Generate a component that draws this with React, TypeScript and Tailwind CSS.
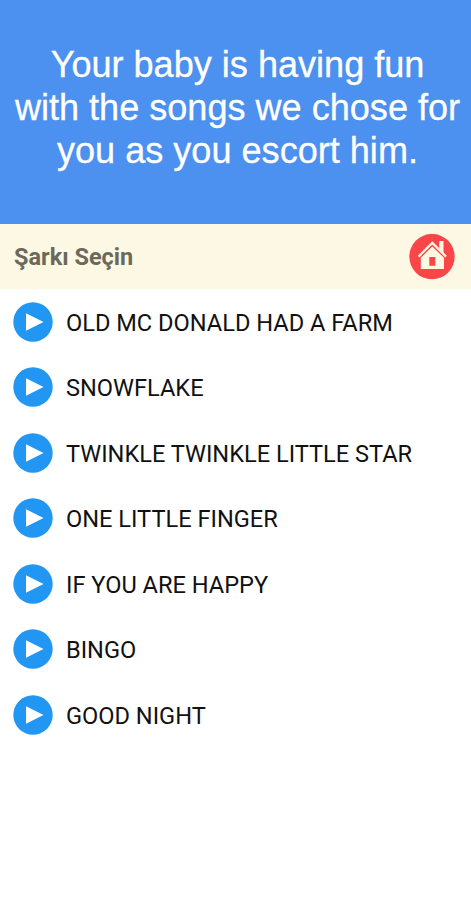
const songs = ["OLD MC DONALD HAD A FARM", "SNOWFLAKE", "TWINKLE TWINKLE LITTLE STAR", "ONE LITTLE FINGER", "IF YOU ARE HAPPY", "BINGO", "GOOD NIGHT"];

function HomeIcon() {
  return (
    <svg viewBox="0 0 46 46" className="h-[46px] w-[46px]" aria-label="Home">
      <circle cx="23" cy="22.600" r="22.700" fill="#fb4649" />
      <path d="M30.300 7h4.200v12l-4.200-4z" fill="#fdf8e3" />
      <path d="M9.600 22.600 23.300 8.900 37 22.600" fill="none" stroke="#fdf8e3" strokeWidth="2.200" />
      <path fillRule="evenodd" d="M11.800 23.800 23.300 12.500 35 23.800V35H11.800zM20.300 23v8.700h6V23z" fill="#fdf8e3" />
    </svg>
  );
}

function PlayIcon() {
  return (
    <svg viewBox="0 0 40 40" className="h-10 w-10 shrink-0" aria-hidden="true">
      <circle cx="20" cy="20" r="19.700" fill="#2196f3" />
      <path d="M13 11.200v17.600L30.500 20z" fill="#fff" />
    </svg>
  );
}

export default function App() {
  return (
    <main className="h-[900px] w-[471px] overflow-hidden bg-white font-['Roboto',sans-serif]">
      <header className="h-[224px] bg-[#4c90f0] pt-[43px] pl-[4px] text-center font-['Liberation_Sans',sans-serif] text-[36.100px] leading-[43px] text-white [-webkit-text-stroke:0.3px_white]">
        <p className="whitespace-nowrap">Your baby is having fun<br />with the songs we chose for<br />you as you escort him.</p>
      </header>
      <div className="flex h-[65px] items-center justify-between bg-[#fdf8e3] pr-4 pl-[14px]">
        <h1 className="pt-[3px] text-[23.500px] font-bold text-[#6b695c]">Şarkı Seçin</h1>
        <HomeIcon />
      </div>
      <ul>
        {songs.map((song) => (
          <li key={song} className="flex h-[65.500px] items-center gap-[13px] pl-[13px] text-[23.600px] text-[#111]">
            <PlayIcon /><span className="pt-[3px]">{song}</span>
          </li>
        ))}
      </ul>
    </main>
  );
}
